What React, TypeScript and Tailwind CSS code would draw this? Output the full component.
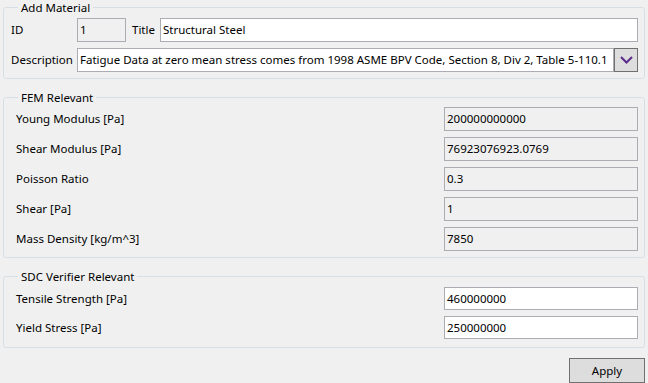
import React from 'react';

const font = { fontFamily: '"Noto Sans", "Open Sans", sans-serif' };

interface FieldRow {
    label: string;
    value: string;
    readOnly?: boolean;
}

const femRows: FieldRow[] = [
    { label: 'Young Modulus [Pa]', value: '200000000000', readOnly: true },
    { label: 'Shear Modulus [Pa]', value: '76923076923.0769', readOnly: true },
    { label: 'Poisson Ratio', value: '0.3', readOnly: true },
    { label: 'Shear [Pa]', value: '1', readOnly: true },
    { label: 'Mass Density [kg/m^3]', value: '7850', readOnly: true },
];

const sdcRows: FieldRow[] = [
    { label: 'Tensile Strength [Pa]', value: '460000000' },
    { label: 'Yield Stress [Pa]', value: '250000000' },
];

const TextBox: React.FC<{ value: string; readOnly?: boolean; className?: string }> = ({ value, readOnly, className = '' }) => (
    <div
        className={`h-full min-w-0 border border-[#abadb3] pl-[2px] flex items-center whitespace-nowrap overflow-hidden text-black ${readOnly ? 'bg-[#f0f0f0]' : 'bg-white'} ${className}`}
    >
        {value}
    </div>
);

const GroupBox: React.FC<{ title: string; className?: string; children: React.ReactNode }> = ({ title, className = '', children }) => (
    <fieldset className={`min-w-0 border border-[#d5dfe5] rounded-[3px] px-[7px] ${className}`}>
        <legend className="ml-[7px] px-[3px] leading-[15px] text-black">{title}</legend>
        {children}
    </fieldset>
);

export default function App() {
    return (
        <div className="w-[648px] h-[383px] bg-[#f0f0f0] px-[3px] text-[11.5px] text-black overflow-hidden" style={font}>
            <GroupBox title="Add Material" className="pt-[3px] pb-[6px] pr-[6px]">
                <div className="flex flex-col gap-[6px]">
                    <div className="flex items-center h-[24px]">
                        <span className="w-[66px] shrink-0">ID</span>
                        <TextBox value="1" readOnly className="w-[49px] shrink-0" />
                        <span className="ml-[6px] w-[28px] shrink-0">Title</span>
                        <TextBox value="Structural Steel" className="flex-1" />
                    </div>
                    <div className="flex items-center h-[24px]">
                        <span className="w-[66px] shrink-0">Description</span>
                        <TextBox
                            value="Fatigue Data at zero mean stress comes from 1998 ASME BPV Code, Section 8, Div 2, Table 5-110.1"
                            className="flex-1"
                        />
                        <div className="w-[24px] h-full shrink-0 border border-[#707070] bg-[#dddddd] flex items-center justify-center">
                            <svg width="13" height="8" viewBox="0 0 13 8">
                                <polyline points="1,1 6.5,6.5 12,1" fill="none" stroke="#5b2b8c" strokeWidth="2" />
                            </svg>
                        </div>
                    </div>
                </div>
            </GroupBox>

            <GroupBox title="FEM Relevant" className="mt-[11px] pt-[2px] pb-[6px] pr-[6px]">
                <div className="flex flex-col gap-[6px]">
                    {femRows.map(row => (
                        <div key={row.label} className="flex items-center h-[24px]">
                            <span className="pl-[5px] flex-1">{row.label}</span>
                            <TextBox value={row.value} readOnly={row.readOnly} className="w-[194px] shrink-0" />
                        </div>
                    ))}
                </div>
            </GroupBox>

            <GroupBox title="SDC Verifier Relevant" className="mt-[11px] pt-[3px] pb-[8px] pr-[6px]">
                <div className="flex flex-col gap-[6px]">
                    {sdcRows.map(row => (
                        <div key={row.label} className="flex items-center h-[23px]">
                            <span className="pl-[5px] flex-1">{row.label}</span>
                            <TextBox value={row.value} className="w-[194px] shrink-0" />
                        </div>
                    ))}
                </div>
            </GroupBox>

            <div className="flex justify-end mt-[10px]">
                <button className="w-[76px] h-[25px] border border-[#707070] bg-[#dddddd] text-black">Apply</button>
            </div>
        </div>
    );
}
